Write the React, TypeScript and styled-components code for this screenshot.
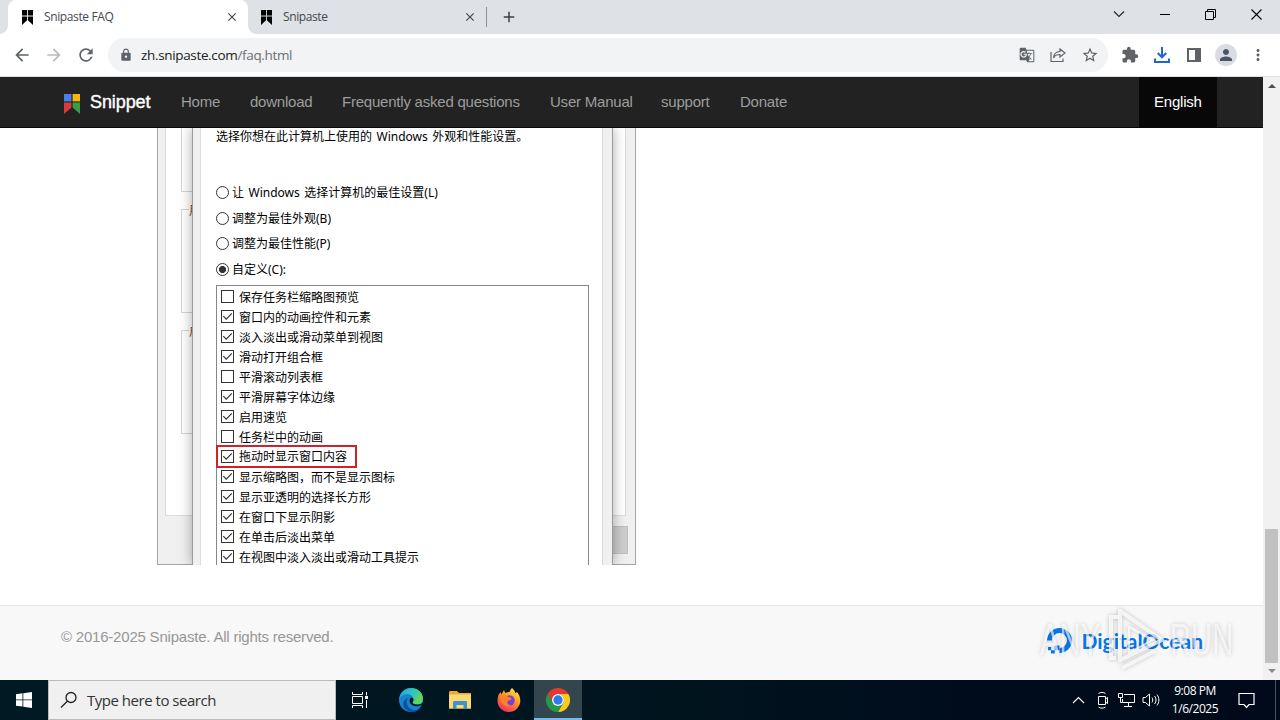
import React from "react";
import styled, { createGlobalStyle } from "styled-components";
import {
  MdAdd,
  MdArrowBack,
  MdArrowForward,
  MdClose,
  MdExtension,
  MdGTranslate,
  MdLock,
  MdMoreVert,
  MdPerson,
  MdRefresh,
  MdStarBorder,
} from "react-icons/md";

const GlobalStyle = createGlobalStyle`
  * {
    box-sizing: border-box;
  }
  body {
    margin: 0;
    overflow: hidden;
    font-family: "Liberation Sans", Arial, sans-serif;
  }
  svg {
    display: block;
    flex-shrink: 0;
  }
`;

const Screen = styled.div`
  width: 1280px;
  height: 720px;
  display: flex;
  flex-direction: column;
  background: #fff;
`;

/* Tab strip */
const TabStrip = styled.div`
  display: flex;
  height: 34px;
  background: #dee1e6;
  padding-left: 8px;
`;
const Tab = styled.div<{ $active?: boolean }>`
  position: relative;
  display: flex;
  align-items: center;
  width: ${({ $active }) => ($active ? 240 : 238)}px;
  padding: 0 9px 0 ${({ $active }) => ($active ? 14 : 13)}px;
  border-radius: 8px 8px 0 0;
  background: ${({ $active }) => ($active ? "#fff" : "transparent")};
  color: #45494d;
  &::before,
  &::after {
    content: "";
    display: ${({ $active }) => ($active ? "block" : "none")};
    position: absolute;
    bottom: 0;
    width: 8px;
    height: 8px;
  }
  &::before {
    left: -8px;
    background: radial-gradient(circle at 0 0, transparent 7.5px, #fff 8px);
  }
  &::after {
    right: -8px;
    background: radial-gradient(circle at 100% 0, transparent 7.5px, #fff 8px);
  }
`;
const TabTitle = styled.span<{ $spacing: number }>`
  flex: 1;
  margin-left: 11px;
  padding-bottom: 1px;
  font-family: "Open Sans", sans-serif;
  font-size: 12px;
  letter-spacing: ${({ $spacing }) => $spacing}px;
  white-space: nowrap;
`;
const TabDivider = styled.div`
  width: 1px;
  height: 20px;
  margin: 7px 13px 0 0;
  background: #8d9196;
`;
const NewTab = styled.div`
  display: flex;
  align-items: center;
  color: #3c4043;
`;
const WindowButtons = styled.div`
  display: flex;
  margin-left: auto;
`;
const WindowButton = styled.div`
  display: flex;
  align-items: center;
  justify-content: center;
  width: 46px;
  height: 28px;
`;

/* Address bar */
const Toolbar = styled.div`
  display: flex;
  align-items: center;
  height: 43px;
  padding: 0 10px 0 12px;
  border-bottom: 1px solid #dcdfe3;
  color: #5f6368;
`;
const ToolButton = styled.div<{ $faded?: boolean }>`
  display: flex;
  width: 32px;
  color: ${({ $faded }) => ($faded ? "#b9bbbe" : "inherit")};
`;
const AddressBar = styled.div`
  display: flex;
  align-items: center;
  width: 1000px;
  height: 34px;
  padding: 0 9px 0 11px;
  border-radius: 17px;
  background: #f1f3f4;
`;
const Url = styled.div`
  flex: 1;
  margin-left: 8px;
  padding-bottom: 1px;
  font-family: "Open Sans", sans-serif;
  font-size: 13.5px;
  letter-spacing: -0.34px;
  color: #6b6f74;
  span {
    color: #202124;
  }
`;
const AddressActions = styled.div`
  display: flex;
  align-items: center;
  gap: 14px;
`;
const ToolbarActions = styled.div`
  display: flex;
  align-items: center;
  gap: 14px;
  margin-left: 13px;
`;
const Avatar = styled.div`
  display: flex;
  align-items: center;
  justify-content: center;
  width: 22px;
  height: 22px;
  margin: 0 -2px;
  border-radius: 50%;
  background: #d9dce3;
  color: #4c5468;
`;

/* Page */
const Viewport = styled.div`
  display: flex;
  height: 603px;
`;
const Page = styled.div`
  position: relative;
  display: flex;
  flex-direction: column;
  width: 1263px;
`;
const Navbar = styled.div`
  display: flex;
  height: 51px;
  padding: 0 46px 0 64px;
  background: #222;
  border-bottom: 1px solid #080808;
`;
const Brand = styled.div`
  display: flex;
  align-items: center;
  width: 102px;
  gap: 10px;
  color: #fff;
  font-size: 18px;
  letter-spacing: -0.1px;
  -webkit-text-stroke: 0.4px #fff;
  svg {
    margin-top: 4px;
  }
`;
const NavLink = styled.div<{ $width: number; $active?: boolean }>`
  width: ${({ $width }) => $width}px;
  padding-left: 15px;
  line-height: 50px;
  font-size: 15px;
  letter-spacing: -0.22px;
  white-space: nowrap;
  color: ${({ $active }) => ($active ? "#fff" : "#9d9d9d")};
  background: ${({ $active }) => ($active ? "#080808" : "transparent")};
  margin-left: ${({ $active }) => ($active ? "auto" : 0)};
`;
const Article = styled.div`
  height: 477px;
  padding-left: 157px;
`;

/* Dialogs shown in the article */
const DialogStack = styled.div`
  position: relative;
  width: 479px;
  height: 437px;
  overflow: hidden;
`;
const BackDialog = styled.div`
  height: 437px;
  padding: 0 9px 0 7px;
  border: solid #a5a5a5;
  border-width: 0 1px 1px;
  background: #f0f0f0;
`;
const BackPanel = styled.div`
  height: 388px;
  padding-left: 15px;
  border: 1px solid #dcdcdc;
  border-top: 0;
  background: #fff;
`;
const GroupBox = styled.div<{ $height: number; $gap: number }>`
  width: 400px;
  height: ${({ $height }) => $height}px;
  margin-bottom: ${({ $gap }) => $gap}px;
  border: 1px solid #d5d5d5;
  border-right: 0;
  &:first-child {
    border-top: 0;
  }
`;
const GroupLabel = styled.div`
  width: 14px;
  margin: -9px 0 0 7px;
  background: #fff;
  color: #7a4020;
  font-family: "Noto Sans CJK SC", sans-serif;
  font-size: 12px;
  line-height: 18px;
`;
const BackButton = styled.div`
  width: 60px;
  height: 28px;
  margin: 10px -2px 0 auto;
  border: 1px solid #bfbfbf;
  background: #ccc;
`;
const FrontDialog = styled.div`
  position: absolute;
  top: 0;
  left: 35px;
  width: 421px;
  height: 437px;
  padding: 0 9px 0 7px;
  border: solid #9b9b9b;
  border-width: 0 1px;
  background: #f0f0f0;
  box-shadow: 0 0 12px rgba(0, 0, 0, 0.34);
`;
const FrontPanel = styled.div`
  height: 437px;
  padding: 0 13px 0 15px;
  border: solid #dcdcdc;
  border-width: 0 1px;
  background: #fff;
  color: #000;
  font-family: "Noto Sans", "Noto Sans CJK SC", sans-serif;
  font-size: 12px;
  word-spacing: 1.4px;
  white-space: nowrap;
`;
const Intro = styled.div`
  height: 52px;
  line-height: 18px;
`;
const RadioRow = styled.div`
  display: flex;
  align-items: center;
  gap: 3px;
  height: 25.6px;
  span {
    padding-bottom: 1.4px;
  }
`;
const Radio = styled.div<{ $checked?: boolean }>`
  width: 13px;
  height: 13px;
  border: 1px solid #333;
  border-radius: 50%;
  background: ${({ $checked }) =>
    $checked ? "radial-gradient(circle, #333 3.2px, #fff 3.9px)" : "#fff"};
`;
const OptionList = styled.div`
  width: 373px;
  height: 300px;
  margin-top: 2.6px;
  padding-top: 1px;
  border: 1px solid #828790;
`;
const OptionRow = styled.div<{ $marked?: boolean }>`
  display: flex;
  align-items: center;
  gap: 5px;
  width: ${({ $marked }) => ($marked ? "141px" : "auto")};
  height: ${({ $marked }) => ($marked ? 23 : 20)}px;
  margin: ${({ $marked }) => ($marked ? "-2px 0 -1px -1px" : 0)};
  padding-left: ${({ $marked }) => ($marked ? 3 : 4)}px;
  border: ${({ $marked }) => ($marked ? "2px solid #d0222b" : "0")};
`;
const CheckBox = styled.div`
  width: 13px;
  height: 13px;
  border: 1px solid #333;
  background: #fff;
`;

/* Footer and scrollbar */
const Footer = styled.div`
  display: flex;
  align-items: flex-start;
  justify-content: space-between;
  height: 75px;
  padding: 20px 60px 0 61px;
  border-top: 1px solid #e7e7e7;
  background: #f8f8f8;
`;
const Copyright = styled.div`
  color: #979797;
  font-size: 15px;
  line-height: 21px;
  letter-spacing: -0.21px;
`;
const Sponsor = styled.div`
  display: flex;
  align-items: center;
  gap: 8px;
  height: 28px;
  color: #0878e8;
  font-family: Lato, sans-serif;
  font-size: 21px;
  font-weight: 700;
`;
const Watermark = styled.div`
  position: absolute;
  right: 31px;
  bottom: 7px;
  display: flex;
  align-items: center;
  gap: 5px;
  color: rgba(255, 255, 255, 0.62);
  filter: drop-shadow(0 0 2px rgba(0, 0, 0, 0.3));
`;
const WatermarkWord = styled.span`
  display: block;
  width: 62px;
  font-size: 45px;
  line-height: 64px;
  transform: scaleX(0.65);
  transform-origin: left;
  white-space: nowrap;
`;
const Scrollbar = styled.div`
  display: flex;
  flex-direction: column;
  align-items: center;
  justify-content: space-between;
  width: 17px;
  height: 603px;
  padding: 6px 0;
  background: #f1f1f1;
`;
const Thumb = styled.div`
  width: 13px;
  height: 134px;
  margin: auto 0 6px;
  background: #c1c1c1;
`;

/* Taskbar */
const Taskbar = styled.div`
  display: flex;
  height: 40px;
  background: linear-gradient(90deg, #001a23 0, #00141e 55%, #000c1c 75%, #000a1a 100%);
  color: #fff;
`;
const TaskButton = styled.div<{ $active?: boolean }>`
  display: flex;
  align-items: center;
  justify-content: center;
  width: 48px;
  margin-right: 1px;
  background: ${({ $active }) => ($active ? "#33464e" : "transparent")};
  box-shadow: ${({ $active }) => ($active ? "inset 0 -2px #76b9ed" : "none")};
`;
const StartButton = styled(TaskButton)`
  margin: 0;
`;
const TaskViewButton = styled(TaskButton)`
  margin-right: 3px;
`;
const Search = styled.div`
  display: flex;
  align-items: center;
  gap: 9px;
  width: 288px;
  padding-left: 11px;
  border: 1px solid #bcbcbc;
  background: #f0f0f0;
  color: #333;
  font-family: "Open Sans", sans-serif;
  font-size: 15px;
  letter-spacing: -0.48px;
`;
const Tray = styled.div`
  display: flex;
  align-items: center;
  gap: 7px;
  margin-left: auto;
`;
const Clock = styled.div`
  display: flex;
  flex-direction: column;
  align-items: center;
  width: 50px;
  margin: 0 11px 0 3px;
  font-family: "Open Sans", sans-serif;
  font-size: 12px;
  line-height: 18px;
  letter-spacing: -0.45px;
  white-space: nowrap;
`;
const ShowDesktop = styled.div`
  width: 5px;
  height: 40px;
  margin-left: 13px;
  border-left: 1px solid #4b535c;
`;

const SnipasteLogo = ({ colored = false }) => {
  const fills = colored
    ? ["#4b7fe8", "#f6b80c", "#d83a3f", "#3d9b46"]
    : ["#000", "#000", "#000", "#000"];
  return (
    <svg
      width={colored ? 16 : 11}
      height={colored ? 20 : 15}
      viewBox="0 0 16 20"
      preserveAspectRatio="none"
    >
      <path d="M0 0h7.4v7.4H0z" fill={fills[0]} />
      <path d="M8.6 0H16v7.4H8.6z" fill={fills[1]} />
      <path d="M0 8.6h7.4v5L0 20z" fill={fills[2]} />
      <path d="M8.6 8.6H16V20l-7.4-6.4z" fill={fills[3]} />
    </svg>
  );
};

const Check = () => (
  <svg width="11" height="11" viewBox="0 0 11 11">
    <path d="M1.3 5.2 4.2 8.1 9.8 2.4" fill="none" stroke="#333" strokeWidth="1.2" />
  </svg>
);

const radios = [
  { label: "让 Windows 选择计算机的最佳设置(L)" },
  { label: "调整为最佳外观(B)" },
  { label: "调整为最佳性能(P)" },
  { label: "自定义(C):", checked: true },
];

const options = [
  { label: "保存任务栏缩略图预览", checked: false },
  { label: "窗口内的动画控件和元素", checked: true },
  { label: "淡入淡出或滑动菜单到视图", checked: true },
  { label: "滑动打开组合框", checked: true },
  { label: "平滑滚动列表框", checked: false },
  { label: "平滑屏幕字体边缘", checked: true },
  { label: "启用速览", checked: true },
  { label: "任务栏中的动画", checked: false },
  { label: "拖动时显示窗口内容", checked: true, marked: true },
  { label: "显示缩略图，而不是显示图标", checked: true },
  { label: "显示亚透明的选择长方形", checked: true },
  { label: "在窗口下显示阴影", checked: true },
  { label: "在单击后淡出菜单", checked: true },
  { label: "在视图中淡入淡出或滑动工具提示", checked: true },
];

const navLinks = [
  { label: "Home", width: 69 },
  { label: "download", width: 92 },
  { label: "Frequently asked questions", width: 208 },
  { label: "User Manual", width: 111 },
  { label: "support", width: 79 },
  { label: "Donate", width: 77 },
];

const BrowserTabs = () => (
  <TabStrip>
    <Tab $active>
      <SnipasteLogo />
      <TabTitle $spacing={-0.38}>Snipaste FAQ</TabTitle>
      <MdClose size={14} />
    </Tab>
    <Tab>
      <SnipasteLogo />
      <TabTitle $spacing={-0.4}>Snipaste</TabTitle>
      <MdClose size={14} />
    </Tab>
    <TabDivider />
    <NewTab>
      <MdAdd size={18} />
    </NewTab>
    <WindowButtons>
      <WindowButton>
        <svg width="12" height="12" fill="none" stroke="#222" strokeWidth="1.1">
          <path d="m1 3.5 5 5 5-5" />
        </svg>
      </WindowButton>
      <WindowButton>
        <svg width="10" height="10">
          <path d="M0 5h10v1H0z" />
        </svg>
      </WindowButton>
      <WindowButton>
        <svg width="12" height="11" fill="none" stroke="#000">
          <path d="M.5 2.5h8v8h-8zM2.5 2.5v-2h8v8h-2" />
        </svg>
      </WindowButton>
      <WindowButton>
        <svg width="12" height="11" fill="none" stroke="#000" strokeWidth="1.1">
          <path d="m.5.5 10 10m0-10-10 10" />
        </svg>
      </WindowButton>
    </WindowButtons>
  </TabStrip>
);

const BrowserToolbar = () => (
  <Toolbar>
    <ToolButton>
      <MdArrowBack size={20} />
    </ToolButton>
    <ToolButton $faded>
      <MdArrowForward size={20} />
    </ToolButton>
    <ToolButton>
      <MdRefresh size={20} />
    </ToolButton>
    <AddressBar>
      <MdLock size={14} />
      <Url>
        <span>zh.snipaste.com</span>/faq.html
      </Url>
      <AddressActions>
        <MdGTranslate size={16} />
        <svg width="18" height="18" viewBox="0 0 18 18" fill="none" stroke="#5f6368" strokeWidth="1.2">
          <path d="M2 6v9.5h12V12.500M11 3l5 4-5 4V8.500C8 8.500 5.500 9.500 4.500 12 4.700 8.500 7 5.700 11 5.500z" />
        </svg>
        <MdStarBorder size={18} />
      </AddressActions>
    </AddressBar>
    <ToolbarActions>
      <MdExtension size={18} />
      <svg width="18" height="18" viewBox="0 0 18 18" fill="none" stroke="#1f66d0" strokeWidth="2">
        <path d="M9 1v10M4.700 7 9 11.300 13.300 7M2 12.500V16h14v-3.500" />
      </svg>
      <svg width="18" height="18" viewBox="0 0 18 18">
        <path fill="#5f6368" d="M2 2h14v14H2zM4 4v10h6V4z" fillRule="evenodd" />
      </svg>
      <Avatar>
        <MdPerson size={18} />
      </Avatar>
      <MdMoreVert size={18} />
    </ToolbarActions>
  </Toolbar>
);

const PerformanceDialogs = () => (
  <DialogStack>
    <BackDialog>
      <BackPanel>
        <GroupBox $height={64} $gap={17} />
        <GroupBox $height={104} $gap={17}>
          <GroupLabel>用</GroupLabel>
        </GroupBox>
        <GroupBox $height={104} $gap={0}>
          <GroupLabel>启</GroupLabel>
        </GroupBox>
      </BackPanel>
      <BackButton />
    </BackDialog>
    <FrontDialog>
      <FrontPanel>
        <Intro>选择你想在此计算机上使用的 Windows 外观和性能设置。</Intro>
        {radios.map((radio) => (
          <RadioRow key={radio.label}>
            <Radio $checked={radio.checked} />
            <span>{radio.label}</span>
          </RadioRow>
        ))}
        <OptionList>
          {options.map((option) => (
            <OptionRow key={option.label} $marked={option.marked}>
              <CheckBox>{option.checked && <Check />}</CheckBox>
              <span>{option.label}</span>
            </OptionRow>
          ))}
        </OptionList>
      </FrontPanel>
    </FrontDialog>
  </DialogStack>
);

const PageFooter = () => (
  <Footer>
    <Copyright>© 2016-2025 Snipaste. All rights reserved.</Copyright>
    <Sponsor>
      <svg width="27" height="27" viewBox="0 0 27 27">
        <path d="M13.500 23.500a10 10 0 1 0-10-10" fill="none" stroke="#0878e8" strokeWidth="5" />
        <path d="M8.700 18.500h4.800v4.800H8.700zM5 23.200h3.700v3.300H5zM2 20h3.200v3.200H2z" fill="#0878e8" />
      </svg>
      <span>DigitalOcean</span>
    </Sponsor>
  </Footer>
);

const AnyRun = () => (
  <Watermark>
    <WatermarkWord>ANY</WatermarkWord>
    <svg width="58" height="66" viewBox="0 0 58 66" fill="none" stroke="rgba(255,255,255,.72)" strokeWidth="4">
      <path d="M13 4v49L55 33z" strokeLinejoin="round" />
      <path d="M12 10H4v41h5M15 61l33-17" />
      <path d="M22 20v26l24-13z" strokeWidth="2" />
    </svg>
    <WatermarkWord>RUN</WatermarkWord>
  </Watermark>
);

const WindowsTaskbar = () => (
  <Taskbar>
    <StartButton>
      <svg width="16" height="16" viewBox="0 0 16 16" fill="#fff">
        <path d="M0 2.200 6.500 1.300v6.200H0zM7.300 1.200 16 0v7.500H7.300zM0 8.300h6.500v6.200L0 13.700zM7.300 8.300H16V16l-8.700-1.300z" />
      </svg>
    </StartButton>
    <Search>
      <svg width="18" height="18" viewBox="0 0 18 18" fill="none" stroke="#222" strokeWidth="1.300">
        <circle cx="11" cy="6.500" r="5" />
        <path d="M7.300 10.200 1 16.500" />
      </svg>
      <span>Type here to search</span>
    </Search>
    <TaskViewButton>
      <svg width="17" height="16" viewBox="0 0 17 16" fill="none" stroke="#fff">
        <path d="M.5 0v2.500h10V0M.5 4.500h10v7H.5zM.5 16v-2.500h10V16M14.500 0v3.500M14.500 8v8" />
        <path d="M13 4h3v3h-3z" fill="#fff" stroke="none" />
      </svg>
    </TaskViewButton>
    <TaskButton>
      <svg width="24" height="24" viewBox="0 0 24 24">
        <defs>
          <linearGradient id="edgeTop" x1="0" y1="0" x2="1" y2="0.400">
            <stop offset="0" stopColor="#22a5e3" />
            <stop offset="0.600" stopColor="#2fc5bd" />
            <stop offset="1" stopColor="#60d957" />
          </linearGradient>
        </defs>
        <circle cx="12" cy="12" r="12" fill="#1683d3" />
        <path d="M.2 11C1.200 4.500 6 0 12 0c7 0 12 5 12 10.500 0 4-3 6-6 6-3 0-4.500-1-4.500-2 0-.7 1-1.200 1-3C14.500 8.800 12 6 8 6 4.500 6 1.500 8 .2 11z" fill="url(#edgeTop)" />
        <path d="M9.500 9.800C6.500 11.500 7 18 11.500 21c3 2 7 1.500 10-2-3 6-11 6.500-15 2C2.500 17 4 11 9.500 9.800z" fill="#0c529c" />
        <path d="M12 9.500c-2.500 2.200-1.500 6.200 1.500 7.800 3.500 1.900 7.500.9 9.300-.5-.5 1.600-1.300 2.700-2.300 3.700H24v-6c-2 2-4.500 2.200-6.500 2-3-.3-4-1.300-4-2 0-.8 1-1.300 1-3 0-1-1-2-2.500-2z" fill="#00141e" />
      </svg>
    </TaskButton>
    <TaskButton>
      <svg width="22" height="18" viewBox="0 0 22 18">
        <path d="M0 1.500C0 .7.500 0 1.300 0H8l2 2h12v15.500H0z" fill="#efa92f" />
        <path d="M0 3.500h22v14H0z" fill="#fbd874" />
        <path d="M4 18v-6.500c0-1 .8-1.500 1.500-1.500h11c1 0 1.500.6 1.500 1.500V18h-3.500v-4h-7v4z" fill="#3d91cf" />
      </svg>
    </TaskButton>
    <TaskButton>
      <svg width="24" height="24" viewBox="0 0 24 24">
        <defs>
          <linearGradient id="fox" x1="0.900" y1="0" x2="0.300" y2="1">
            <stop offset="0" stopColor="#fff04a" />
            <stop offset="0.450" stopColor="#ff9a22" />
            <stop offset="1" stopColor="#f52c5f" />
          </linearGradient>
        </defs>
        <path d="M15 0c2.500 2 3 3.500 3.200 5.200L20 4c3 3.500 4 8 2.800 12C21 21 17 24 12 24 5.500 24 .5 19 .5 13c0-4 1-7 3-9l.8 2.500L7 2l1.200 3C10 4 11.500 4 12.500 4 13 2.500 14 1 15 0z" fill="url(#fox)" />
        <circle cx="12.500" cy="12.500" r="5.200" fill="#7741d8" />
        <path d="M3 8c4-2 6-1 8.500 1 2 .5 3 1 3 2-1 1.500-3 1-4 2.500-1 2 1.500 4 4 3.500-5 3.500-11-.5-11.500-9z" fill="#ff8125" />
      </svg>
    </TaskButton>
    <TaskButton $active>
      <svg width="24" height="24" viewBox="0 0 24 24">
        <path d="M1.600 6A12 12 0 0 1 22.400 6H12a6 6 0 0 0-5.200 9z" fill="#e23b2e" />
        <path d="M22.400 6A12 12 0 0 1 12 24l5.200-9A6 6 0 0 0 12 6z" fill="#fdc91b" />
        <path d="M12 24A12 12 0 0 1 1.600 6l5.200 9a6 6 0 0 0 10.400 0z" fill="#25994a" />
        <circle cx="12" cy="12" r="6" fill="#fff" />
        <circle cx="12" cy="12" r="4.700" fill="#3279e8" />
      </svg>
    </TaskButton>
    <Tray>
      <svg width="16" height="16" viewBox="0 0 16 16" fill="none" stroke="#fff" strokeWidth="1.200">
        <path d="m3 11 5.500-5.500L14 11" />
      </svg>
      <svg width="18" height="18" viewBox="0 0 18 18" fill="none" stroke="#fff">
        <path d="M5.500 5.500h7v8h-7zM12.500 8l2-1.500v6l-2-1.500M5.500 2.500c2-1.500 5-1.500 7 0M5.500 16c2 1.500 5 1.500 7 0" />
      </svg>
      <svg width="17" height="16" viewBox="0 0 17 16" fill="none" stroke="#fff">
        <path d="M6 2.500h10.500v8H4.500V7M10.500 10.500v4M6 14.500h8M.5 1.500h4v4h-4zM2.500 5.500v5h2" />
      </svg>
      <svg width="18" height="16" viewBox="0 0 18 16" fill="none" stroke="#fff">
        <path d="M1 5.500h2.500l4-3.500v12l-4-3.500H1zM10 5.500c1 1.500 1 3.500 0 5M12.500 4c2 2.500 2 5.500 0 8M15 2.500c2.500 3.500 2.500 7.500 0 11" />
      </svg>
      <Clock>
        <span>9:08 PM</span>
        <span>1/6/2025</span>
      </Clock>
      <svg width="17" height="17" viewBox="0 0 17 17" fill="none" stroke="#fff" strokeWidth="1.200">
        <path d="M1 1.500h15v11h-5l-2.500 3-2.500-3H1z" />
      </svg>
      <ShowDesktop />
    </Tray>
  </Taskbar>
);

const App = () => {
  return (
    <Screen>
      <GlobalStyle />
      <BrowserTabs />
      <BrowserToolbar />
      <Viewport>
        <Page>
          <Navbar>
            <Brand>
              <SnipasteLogo colored />
              <span>Snippet</span>
            </Brand>
            {navLinks.map((link) => (
              <NavLink key={link.label} $width={link.width}>
                {link.label}
              </NavLink>
            ))}
            <NavLink $width={78} $active>
              English
            </NavLink>
          </Navbar>
          <Article>
            <PerformanceDialogs />
          </Article>
          <PageFooter />
          <AnyRun />
        </Page>
        <Scrollbar>
          <svg width="8" height="5" viewBox="0 0 8 5">
            <path d="M0 5 4 1l4 4z" fill="#505050" />
          </svg>
          <Thumb />
          <svg width="8" height="5" viewBox="0 0 8 5">
            <path d="m0 0 4 4 4-4z" fill="#8b8b8b" />
          </svg>
        </Scrollbar>
      </Viewport>
      <WindowsTaskbar />
    </Screen>
  );
};

export default App;
